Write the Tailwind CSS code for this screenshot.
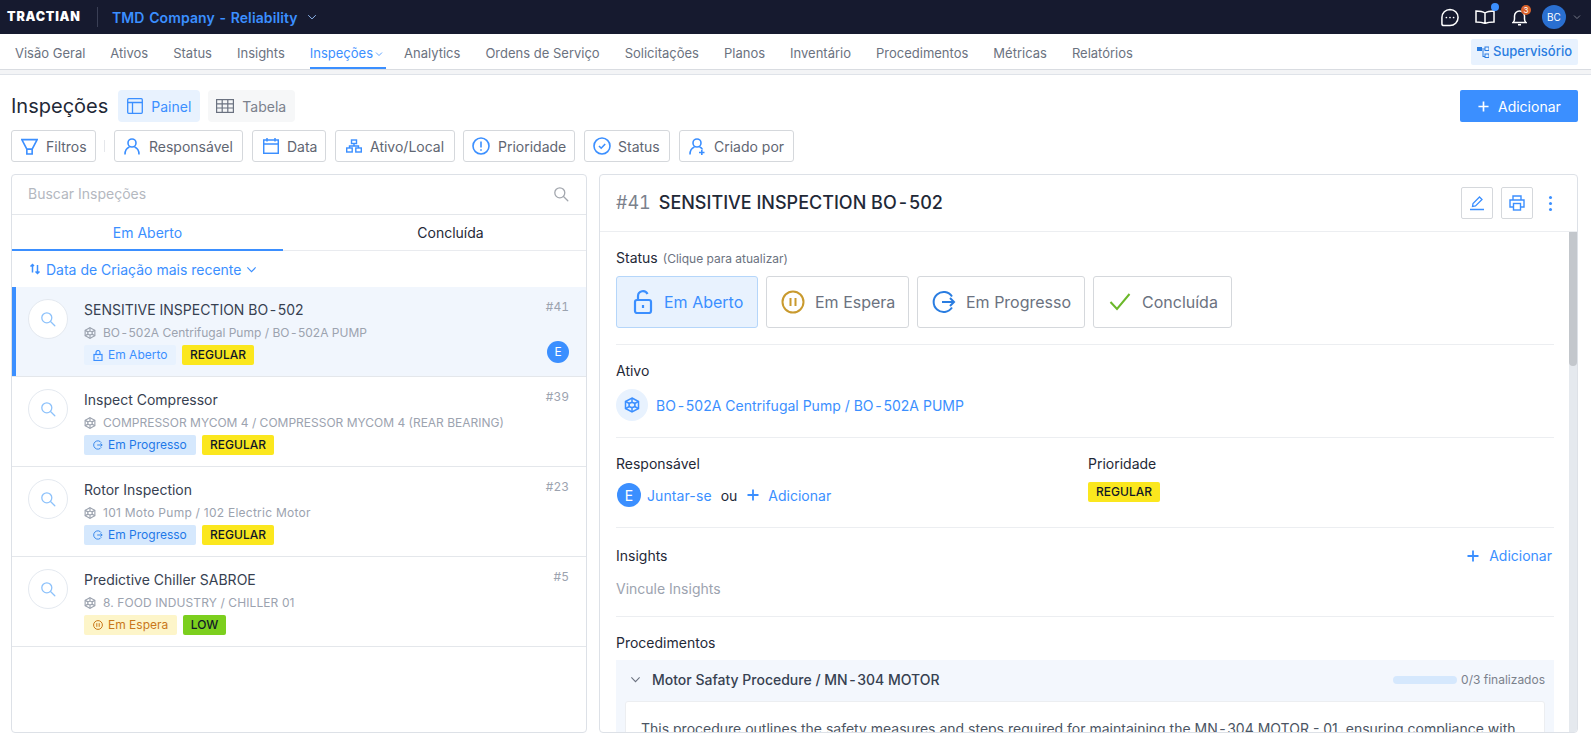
<!DOCTYPE html>
<html lang="en">
<head>
<meta charset="UTF-8" />
<title>Inspeções</title>
<script src="https://cdn.jsdelivr.net/npm/@tailwindcss/browser@4"></script>
</head>
<body class="h-screen overflow-hidden bg-white font-['Inter',sans-serif] text-[14px] text-[#1f2937]">
<svg class="hidden">
  <symbol id="asset" viewBox="0 0 16 16" fill="none" stroke="currentColor" stroke-width="1.5"><path d="M8 1 14.500 4.500V11.500L8 15 1.500 11.500V4.500Z"/><ellipse cx="8" cy="8" rx="3" ry="2.400"/><path d="M8 1v4.500M8 10.500V15M1.500 4.500 5.500 6.500M14.500 4.500 10.500 6.500M1.500 11.500 5.500 9.500M14.500 11.500 10.500 9.500"/></symbol>
  <symbol id="search" viewBox="0 0 16 16" fill="none" stroke="currentColor" stroke-width="1.300"><circle cx="6.800" cy="6.800" r="5"/><path d="m10.500 10.500 4.300 4.300" stroke-linecap="round"/></symbol>
  <symbol id="plus" viewBox="0 0 12 12" fill="none" stroke="currentColor" stroke-width="1.800"><path d="M6 .5v11M.5 6h11"/></symbol>
  <symbol id="chev" viewBox="0 0 12 12" fill="none" stroke="currentColor" stroke-width="1.200"><path d="m1.500 3.800 4.500 4.500 4.500-4.500"/></symbol>
  <symbol id="progress" viewBox="0 0 24 24" fill="none" stroke="currentColor" stroke-width="2"><path d="M20 6.500A10 10 0 1 0 20 17.500"/><path d="M10 12h12M18 8l4 4-4 4"/></symbol>
</svg>

<header class="flex h-[34px] items-center bg-[#161a2f] pl-[7px] pr-[10px]">
  <span class="w-[74px] text-[12.500px] font-black tracking-[0.800px] whitespace-nowrap text-white">TRACTIAN</span>
  <span class="ml-[16px] h-[20px] w-px bg-[#3a3f55]"></span>
  <span class="ml-[14px] text-[14px] font-semibold tracking-[0.1px] text-[#3b8fff] [word-spacing:1px]">TMD Company - Reliability</span>
  <svg class="ml-[9px] h-[10px] w-[10px] text-[#8fb8f0]"><use href="#chev"/></svg>
  <div class="ml-auto flex items-center">
    <svg class="h-[19px] w-[20px] text-white" viewBox="0 0 20 20" fill="none" stroke="currentColor" stroke-width="1.600"><path d="M10 1.500a8.500 8.500 0 0 1 0 17H3.500q-2 0-2-2V10A8.500 8.500 0 0 1 10 1.500Z"/><circle cx="6.200" cy="10" r=".9" fill="currentColor" stroke="none"/><circle cx="10" cy="10" r=".9" fill="currentColor" stroke="none"/><circle cx="13.800" cy="10" r=".9" fill="currentColor" stroke="none"/></svg>
    <div class="relative ml-[15px] h-[14px] w-[20px]">
      <svg class="h-[14px] w-[20px] text-white" viewBox="0 0 20 14" fill="none" stroke="currentColor" stroke-width="1.500"><path d="M10 3Q7 1 1 1v11q6 0 9 1.500Q13 12 19 12V1q-6 0-9 2Zv10"/></svg>
      <span class="absolute -right-[4px] -top-[7px] h-[8px] w-[8px] rounded-full bg-[#3b8fff]"></span>
    </div>
    <div class="relative ml-[17px] h-[17px] w-[15px]">
      <svg class="h-[17px] w-[15px] text-white" viewBox="0 0 15 17" fill="none" stroke="currentColor" stroke-width="1.500"><path d="M1 13.500q1.500-1 1.500-3.500V7a5 5 0 0 1 10 0v3q0 2.500 1.500 3.500ZM6 15.800h3"/></svg>
      <span class="absolute -right-[4px] -top-[4px] flex h-[10px] w-[10px] items-center justify-center rounded-full bg-[#d9622b] text-[8px] text-white">3</span>
    </div>
    <span class="ml-[15px] flex h-[24px] w-[24px] items-center justify-center rounded-full bg-[#2a6fd0] text-[10px] text-white">BC</span>
    <svg class="ml-[7px] h-[8px] w-[8px] text-[#8b8f9c]"><use href="#chev"/></svg>
  </div>
</header>

<nav class="flex h-[36px] items-center border-b border-[#d9dce1] pl-[15px] pr-[13px] text-[13px] text-[#6b7280]">
  <div class="flex h-[35px] items-center gap-[25px] pt-[4px]">
    <span>Visão Geral</span><span>Ativos</span><span>Status</span><span>Insights</span>
    <span class="relative flex h-[31px] items-center pr-[13px] text-[#3b8fff]">Inspeções<svg class="absolute right-[3px] top-[12px] h-[8px] w-[8px]" stroke-width="1.500"><use href="#chev"/></svg><span class="absolute inset-x-0 bottom-0 h-[2px] bg-[#3b8fff]"></span></span>
    <span class="-ml-[7px]">Analytics</span><span>Ordens de Serviço</span><span>Solicitações</span><span>Planos</span><span>Inventário</span><span>Procedimentos</span><span>Métricas</span><span>Relatórios</span>
  </div>
  <span class="ml-auto flex h-[26px] w-[107px] items-center gap-[4px] rounded-[2px] bg-[#e8f2fe] pl-[6px] text-[13px] font-medium text-[#2a7de1]">
    <svg class="h-[12px] w-[12px]" viewBox="0 0 12 12" fill="currentColor"><rect x="0" y="1" width="5" height="4"/><rect x="8" y="1" width="4" height="3.500" fill="none" stroke="currentColor"/><rect x="8" y="8" width="4" height="3.500" fill="none" stroke="currentColor"/><path d="M5 2.500h3v1H5ZM5.500 4h1v6H8v1H5.500Z"/></svg>
    Supervisório
  </span>
</nav>
<div class="h-[5px] border-b border-[#dfe3e9] bg-[#f3f4f6]"></div>

<main class="flex h-[666px] flex-col pl-[11px] pr-[13px] pt-[15px]">
  <div class="flex h-[32px] items-center">
    <h1 class="text-[20px] font-normal text-[#1f2937]">Inspeções</h1>
    <span class="ml-[10px] flex h-[32px] w-[82px] items-center gap-[8px] rounded-[4px] bg-[#e8f2fe] pl-[9px] text-[#3b8fff]">
      <svg class="h-[16px] w-[16px]" viewBox="0 0 16 16" fill="none" stroke="currentColor" stroke-width="1.300"><rect x=".7" y=".7" width="14.600" height="14.600" rx="1"/><path d="M.7 4.500h14.600M5.500 4.500v10.800"/></svg>Painel
    </span>
    <span class="ml-[8px] flex h-[32px] w-[87px] items-center gap-[8px] rounded-[4px] bg-[#f6f7f8] pl-[8px] text-[#7b818c]">
      <svg class="h-[14px] w-[18px]" viewBox="0 0 18 14" fill="none" stroke="#6b7280" stroke-width="1.200"><rect x=".6" y=".6" width="16.800" height="12.800"/><path d="M.6 4.800h16.800M.6 9h16.800M6.200.6v12.800M11.800.6v12.800"/></svg>Tabela
    </span>
    <button class="ml-auto flex h-[32px] w-[118px] items-center gap-[9px] rounded-[2px] bg-[#3b8fff] pl-[18px] text-white">
      <svg class="h-[11px] w-[11px]"><use href="#plus"/></svg>Adicionar
    </button>
  </div>

  <div class="mt-[8px] flex h-[32px] items-center text-[#5f6672]">
    <span class="flex h-[32px] w-[85px] items-center gap-[8px] rounded-[3px] border border-[#d5d8dc] pl-[9px]">
      <svg class="h-[17px] w-[17px] text-[#3b8fff]" viewBox="0 0 16 16" fill="none" stroke="currentColor" stroke-width="1.500"><path d="M.8 1.500h14.400L10.500 10.500h-5ZM5.500 10.500h5v4.500h-5Z"/></svg>Filtros
    </span>
    <span class="ml-[8px] h-[12px] w-px bg-[#e5e7eb]"></span>
    <span class="ml-[9px] flex h-[32px] w-[129px] items-center gap-[9px] rounded-[3px] border border-[#d5d8dc] pl-[9px]">
      <svg class="h-[17px] w-[16px] text-[#3b8fff]" viewBox="0 0 16 17" fill="none" stroke="currentColor" stroke-width="1.600"><circle cx="8" cy="5" r="4"/><path d="M1 16.500q0-6 4.500-7.500M15 16.500q0-6-4.500-7.500"/></svg>Responsável
    </span>
    <span class="ml-[9px] flex h-[32px] w-[74px] items-center gap-[8px] rounded-[3px] border border-[#d5d8dc] pl-[10px]">
      <svg class="h-[16px] w-[16px] text-[#3b8fff]" viewBox="0 0 16 16" fill="none" stroke="currentColor" stroke-width="1.500"><rect x=".7" y="2" width="14.600" height="13.300"/><path d="M.7 6h14.600M4 0v3.500M12 0v3.500"/></svg>Data
    </span>
    <span class="ml-[9px] flex h-[32px] w-[120px] items-center gap-[8px] rounded-[3px] border border-[#d5d8dc] pl-[10px]">
      <svg class="h-[14px] w-[16px] text-[#3b8fff]" viewBox="0 0 16 14" fill="none" stroke="currentColor" stroke-width="1.400"><rect x="5.500" y="1" width="5" height="3.500"/><rect x=".7" y="9" width="5.500" height="4"/><rect x="9.800" y="9" width="5.500" height="4"/><path d="M8 4.500V7M3.500 9V7h9v2"/></svg>Ativo/Local
    </span>
    <span class="ml-[8px] flex h-[32px] w-[112px] items-center gap-[8px] rounded-[3px] border border-[#d5d8dc] pl-[8px]">
      <svg class="h-[18px] w-[18px] text-[#3b8fff]" viewBox="0 0 18 18" fill="none" stroke="currentColor" stroke-width="1.600"><circle cx="9" cy="9" r="8"/><path d="M9 4.500v6M9 12.300v1.400"/></svg>Prioridade
    </span>
    <span class="ml-[9px] flex h-[32px] w-[86px] items-center gap-[7px] rounded-[3px] border border-[#d5d8dc] pl-[8px]">
      <svg class="h-[18px] w-[18px] text-[#3b8fff]" viewBox="0 0 18 18" fill="none" stroke="currentColor" stroke-width="1.600"><circle cx="9" cy="9" r="8"/><path d="m6 9 2.200 2.200L12.200 7"/></svg>Status
    </span>
    <span class="ml-[9px] flex h-[32px] w-[115px] items-center gap-[9px] rounded-[3px] border border-[#d5d8dc] pl-[9px]">
      <svg class="h-[17px] w-[16px] text-[#3b8fff]" viewBox="0 0 16 17" fill="none" stroke="currentColor" stroke-width="1.600"><circle cx="8" cy="5" r="4"/><path d="M1 16.500q0-6 4.500-7.500M10.500 9q2 .6 3 2.500M10 14.500h5.500M12.800 12v5"/></svg>Criado por
    </span>
  </div>

  <div class="mt-[12px] flex min-h-0 flex-1 gap-[12px] pb-[8px]">
    <section class="flex w-[576px] flex-col overflow-hidden rounded-[4px] border border-[#dde1e7]">
      <div class="flex h-[40px] flex-none items-center justify-between border-b border-[#e4e7eb] pb-[2px] pl-[16px] pr-[17px] text-[#b4b8bf]">
        Buscar Inspeções
        <svg class="h-[16px] w-[16px] text-[#a3a7ae]"><use href="#search"/></svg>
      </div>
      <div class="flex h-[36px] flex-none border-b border-[#e9ebef]">
        <span class="-mb-px flex w-[271px] items-center justify-center border-b-2 border-[#3b8fff] text-[#3b8fff]">Em Aberto</span>
        <span class="flex flex-1 items-center justify-center pl-[32px] text-[#1f2937]">Concluída</span>
      </div>
      <div class="flex h-[36px] flex-none items-center pl-[17px] text-[#3b8fff]">
        <svg class="h-[12px] w-[12px]" viewBox="0 0 12 12" fill="none" stroke="currentColor" stroke-width="1.500"><path d="M3.500 9.500V1.500M1.500 3.500l2-2 1.500 1.500M8.500 2v8.500M6.500 8.500l2 2 2-2"/></svg>
        <span class="ml-[5px]">Data de Criação mais recente</span>
        <svg class="ml-[5px] h-[11px] w-[11px]"><use href="#chev"/></svg>
      </div>

      <div class="relative h-[90px] flex-none border-b border-[#e4e7eb] bg-[#f1f6fd] pl-[16px] pr-[17px]">
        <span class="absolute inset-y-0 left-0 w-[4px] bg-[#3b8fff]"></span>
        <div class="flex pt-[12px]">
          <span class="flex h-[40px] w-[40px] flex-none items-center justify-center rounded-full border border-[#e4e9f0] bg-white text-[#8dc2fb]"><svg class="h-[16px] w-[16px]" stroke-width="1.700"><use href="#search"/></svg></span>
          <div class="ml-[16px] min-w-0 flex-1">
            <div class="text-[14px] leading-[22px] text-[#374151]">SENSITIVE INSPECTION BO<span class="mx-[1.500px]">-</span>502</div>
            <div class="mt-[2px] flex items-center text-[12px] leading-[20px] text-[#9ca3af]"><svg class="mr-[7px] h-[12px] w-[12px]"><use href="#asset"/></svg><span>BO<span class="mx-[1.500px]">-</span>502A Centrifugal Pump / BO<span class="mx-[1.500px]">-</span>502A PUMP</span></div>
            <div class="mt-[2px] flex gap-[6px]">
              <span class="flex h-[20px] w-[92px] items-center gap-[5px] rounded-[2px] bg-[#e8f2fe] pl-[9px] text-[12px] text-[#3b8fff]"><svg class="h-[11px] w-[10px]" viewBox="0 0 10 11" fill="none" stroke="currentColor" stroke-width="1.200"><rect x="1" y="4.500" width="8" height="6"/><path d="M3 4.500V2.500a2 2 0 0 1 4 0v2M5 7v1.500"/></svg>Em Aberto</span>
              <span class="flex h-[20px] w-[72px] items-center justify-center rounded-[2px] bg-[#fbe71e] text-[12px] font-medium text-[#111827]">REGULAR</span>
            </div>
          </div>
          <div class="flex flex-col items-end text-[12px] text-[#9ca3af]">
            <span class="leading-[16px] tabular-nums">#41</span>
            <span class="mt-[26px] flex h-[22px] w-[22px] items-center justify-center rounded-full bg-[#3b8fff] text-white">E</span>
          </div>
        </div>
      </div>

      <div class="h-[90px] flex-none border-b border-[#e4e7eb] pl-[16px] pr-[17px]">
        <div class="flex pt-[12px]">
          <span class="flex h-[40px] w-[40px] flex-none items-center justify-center rounded-full border border-[#e4e9f0] bg-white text-[#8dc2fb]"><svg class="h-[16px] w-[16px]" stroke-width="1.700"><use href="#search"/></svg></span>
          <div class="ml-[16px] min-w-0 flex-1">
            <div class="text-[14px] leading-[22px] text-[#374151]">Inspect Compressor</div>
            <div class="mt-[2px] flex items-center text-[12px] leading-[20px] text-[#9ca3af]"><svg class="mr-[7px] h-[12px] w-[12px]"><use href="#asset"/></svg>COMPRESSOR MYCOM 4 / COMPRESSOR MYCOM 4 (REAR BEARING)</div>
            <div class="mt-[2px] flex gap-[6px]">
              <span class="flex h-[20px] w-[112px] items-center gap-[5px] rounded-[2px] bg-[#d5e8fd] pl-[9px] text-[12px] text-[#1f78e8]"><svg class="h-[10px] w-[10px]"><use href="#progress"/></svg>Em Progresso</span>
              <span class="flex h-[20px] w-[72px] items-center justify-center rounded-[2px] bg-[#fbe71e] text-[12px] font-medium text-[#111827]">REGULAR</span>
            </div>
          </div>
          <span class="text-[12px] leading-[16px] tabular-nums text-[#9ca3af]">#39</span>
        </div>
      </div>

      <div class="h-[90px] flex-none border-b border-[#e4e7eb] pl-[16px] pr-[17px]">
        <div class="flex pt-[12px]">
          <span class="flex h-[40px] w-[40px] flex-none items-center justify-center rounded-full border border-[#e4e9f0] bg-white text-[#8dc2fb]"><svg class="h-[16px] w-[16px]" stroke-width="1.700"><use href="#search"/></svg></span>
          <div class="ml-[16px] min-w-0 flex-1">
            <div class="text-[14px] leading-[22px] text-[#374151]">Rotor Inspection</div>
            <div class="mt-[2px] flex items-center text-[12px] leading-[20px] text-[#9ca3af]"><svg class="mr-[7px] h-[12px] w-[12px]"><use href="#asset"/></svg><span class="tracking-[0.25px]">101 Moto Pump / 102 Electric Motor</span></div>
            <div class="mt-[2px] flex gap-[6px]">
              <span class="flex h-[20px] w-[112px] items-center gap-[5px] rounded-[2px] bg-[#d5e8fd] pl-[9px] text-[12px] text-[#1f78e8]"><svg class="h-[10px] w-[10px]"><use href="#progress"/></svg>Em Progresso</span>
              <span class="flex h-[20px] w-[72px] items-center justify-center rounded-[2px] bg-[#fbe71e] text-[12px] font-medium text-[#111827]">REGULAR</span>
            </div>
          </div>
          <span class="text-[12px] leading-[16px] tabular-nums text-[#9ca3af]">#23</span>
        </div>
      </div>

      <div class="h-[90px] flex-none border-b border-[#e4e7eb] pl-[16px] pr-[17px]">
        <div class="flex pt-[12px]">
          <span class="flex h-[40px] w-[40px] flex-none items-center justify-center rounded-full border border-[#e4e9f0] bg-white text-[#8dc2fb]"><svg class="h-[16px] w-[16px]" stroke-width="1.700"><use href="#search"/></svg></span>
          <div class="ml-[16px] min-w-0 flex-1">
            <div class="text-[14px] leading-[22px] text-[#374151]">Predictive Chiller SABROE</div>
            <div class="mt-[2px] flex items-center text-[12px] leading-[20px] text-[#9ca3af]"><svg class="mr-[7px] h-[12px] w-[12px]"><use href="#asset"/></svg><span class="tracking-[0.1px]">8. FOOD INDUSTRY / CHILLER 01</span></div>
            <div class="mt-[2px] flex gap-[6px]">
              <span class="flex h-[20px] w-[93px] items-center gap-[5px] rounded-[2px] bg-[#fdf5c9] pl-[9px] text-[12px] text-[#c9771a]"><svg class="h-[10px] w-[10px]" viewBox="0 0 10 10" fill="none" stroke="currentColor" stroke-width="1"><circle cx="5" cy="5" r="4.400"/><path d="M3.800 3.200v3.600M6.200 3.200v3.600"/></svg>Em Espera</span>
              <span class="flex h-[20px] w-[43px] items-center justify-center rounded-[2px] bg-[#7ccf1e] text-[12px] font-medium text-[#111827]">LOW</span>
            </div>
          </div>
          <span class="text-[12px] leading-[16px] tabular-nums text-[#9ca3af]">#5</span>
        </div>
      </div>
    </section>

    <section class="flex min-w-0 flex-1 flex-col overflow-hidden rounded-[4px] border border-[#dde1e7]">
      <div class="flex h-[57px] flex-none items-center border-b border-[#eceef1] pl-[16px] pr-[25px]">
        <span class="-mt-px text-[18px] tabular-nums text-[#7b818c]">#41</span>
        <span class="-mt-px ml-[8px] text-[18px] font-medium text-[#1f2937]">SENSITIVE INSPECTION BO<span class="mx-[2px]">-</span>502</span>
        <span class="ml-auto flex h-[32px] w-[32px] items-center justify-center rounded-[2px] border border-[#d5d8dc] text-[#3b8fff]"><svg class="h-[16px] w-[16px]" viewBox="0 0 16 16" fill="none" stroke="currentColor" stroke-width="1.300"><path d="m3.500 11.500.5-3L10.500 2l2.500 2.500L6.500 11ZM1 14.500h14"/></svg></span>
        <span class="ml-[8px] flex h-[32px] w-[32px] items-center justify-center rounded-[2px] border border-[#d5d8dc] text-[#3b8fff]"><svg class="h-[16px] w-[16px]" viewBox="0 0 16 16" fill="none" stroke="currentColor" stroke-width="1.400"><path d="M4 5V1h8v4M4 12H1V5h14v7h-3"/><rect x="4.500" y="8.500" width="7" height="6.500"/></svg></span>
        <span class="ml-[16px] flex flex-col gap-[3px]"><i class="h-[3px] w-[3px] rounded-full bg-[#3b8fff]"></i><i class="h-[3px] w-[3px] rounded-full bg-[#3b8fff]"></i><i class="h-[3px] w-[3px] rounded-full bg-[#3b8fff]"></i></span>
      </div>
      <div class="relative flex min-h-0 flex-1">
        <div class="min-w-0 flex-1 overflow-hidden pl-[16px] pr-[15px]">
          <div class="h-[113px] border-b border-[#eceef1] pt-[17px]">
            <div class="flex items-baseline leading-[18px]"><span>Status</span><span class="ml-[5px] text-[12px] text-[#6b7280]">(Clique para atualizar)</span></div>
            <div class="mt-[8px] flex gap-[8px] text-[16px] text-[#6b7280]">
              <span class="flex h-[52px] w-[142px] items-center gap-[11px] rounded-[3px] border border-[#b5d6fa] bg-[#e8f2fe] pl-[16px] text-[#3b8fff]"><svg class="h-[24px] w-[20px]" viewBox="0 0 20 24" fill="none" stroke="currentColor" stroke-width="2.200"><rect x="2" y="10" width="16" height="13" rx="2"/><path d="M5 10V6a5 5 0 0 1 9.500-2M10 15v3"/></svg>Em Aberto</span>
              <span class="flex h-[52px] w-[143px] items-center gap-[10px] rounded-[3px] border border-[#d5d8dc] pl-[14px]"><svg class="h-[24px] w-[24px] text-[#c99a2e]" viewBox="0 0 24 24" fill="none" stroke="currentColor" stroke-width="2"><circle cx="12" cy="12" r="10.500"/><path d="M9.500 8v8M14.500 8v8"/></svg>Em Espera</span>
              <span class="flex h-[52px] w-[168px] items-center gap-[10px] rounded-[3px] border border-[#d5d8dc] pl-[14px]"><svg class="h-[24px] w-[24px] text-[#2a7de1]"><use href="#progress"/></svg>Em Progresso</span>
              <span class="flex h-[52px] w-[139px] items-center gap-[11px] rounded-[3px] border border-[#d5d8dc] pl-[15px]"><svg class="h-[20px] w-[22px] text-[#6bb82a]" viewBox="0 0 22 20" fill="none" stroke="currentColor" stroke-width="2"><path d="m1.500 10 6.500 7L20.500 2"/></svg>Concluída</span>
            </div>
          </div>
          <div class="h-[93px] border-b border-[#eceef1] pt-[17px]">
            <div class="leading-[18px]">Ativo</div>
            <div class="mt-[9px] flex items-center gap-[8px] text-[#3b8fff]">
              <span class="flex h-[32px] w-[32px] items-center justify-center rounded-full bg-[#e8f2fe]"><svg class="h-[16px] w-[16px]"><use href="#asset"/></svg></span>
              <span>BO<span class="mx-[1.750px]">-</span>502A Centrifugal Pump / BO<span class="mx-[1.750px]">-</span>502A PUMP</span>
            </div>
          </div>
          <div class="flex h-[90px] border-b border-[#eceef1] pt-[17px]">
            <div class="w-[472px]">
              <div class="leading-[18px]">Responsável</div>
              <div class="mt-[10px] flex items-center text-[#3b8fff]">
                <span class="ml-px flex h-[24px] w-[24px] items-center justify-center rounded-full bg-[#3b8fff] text-white">E</span>
                <span class="ml-[6px] tracking-[0.1px]">Juntar-se</span>
                <span class="ml-[9px] text-[#1f2937]">ou</span>
                <svg class="ml-[10px] h-[12px] w-[12px]"><use href="#plus"/></svg>
                <span class="ml-[9px]">Adicionar</span>
              </div>
            </div>
            <div>
              <div class="leading-[18px]">Prioridade</div>
              <span class="mt-[9px] flex h-[20px] w-[72px] items-center justify-center rounded-[2px] bg-[#fbe71e] text-[12px] font-medium text-[#111827]">REGULAR</span>
            </div>
          </div>
          <div class="h-[89px] border-b border-[#eceef1] pt-[19px]">
            <div class="flex items-center justify-between leading-[18px]">
              Insights
              <span class="flex items-center gap-[10px] pr-[2px] text-[#3b8fff]"><svg class="h-[12px] w-[12px]"><use href="#plus"/></svg>Adicionar</span>
            </div>
            <div class="mt-[15px] leading-[18px] text-[#9ca3af]">Vincule Insights</div>
          </div>
          <div class="pt-[17px] leading-[18px]">Procedimentos</div>
          <div class="mt-[8px] bg-[#f3f7fd]">
            <div class="flex h-[41px] items-center pb-[2px] pl-[14px] pr-[9px]">
              <svg class="h-[11px] w-[11px] text-[#6b7280]"><use href="#chev"/></svg>
              <span class="ml-[11px] font-medium text-[#374151]">Motor Safaty Procedure / MN<span class="mx-[1.500px]">-</span>304 MOTOR</span>
              <span class="ml-auto h-[8px] w-[64px] rounded-full bg-[#d5e8fd]"></span>
              <span class="ml-[4px] text-[12px] text-[#7b818c]">0/3 finalizados</span>
            </div>
            <div class="mx-[9px] h-[60px] rounded-t-[3px] border border-[#eceef1] bg-white pl-[15px] pt-[16px] text-[14px] leading-[22px] whitespace-nowrap text-[#4b5563]">This procedure outlines the safety measures and steps required for maintaining the MN<span class="mx-[1.500px]">-</span>304 MOTOR - 01, ensuring compliance with</div>
          </div>
        </div>
        <div class="w-[8px] flex-none bg-[#e5e9ee]"><div class="h-[134px] rounded-b-[4px] bg-[#c3c7cc]"></div></div>
      </div>
    </section>
  </div>
</main>
</body>
</html>
